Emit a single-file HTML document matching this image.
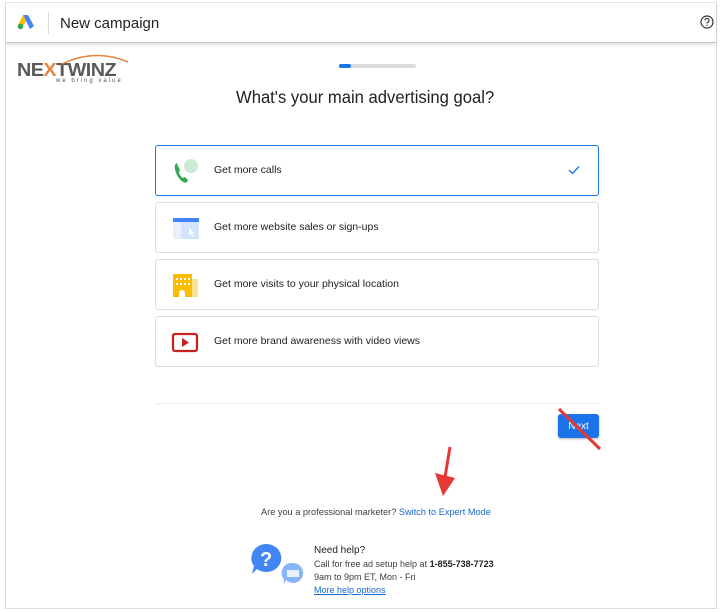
<!DOCTYPE html>
<html><head><style>
*{box-sizing:border-box;margin:0;padding:0}
body{width:720px;height:612px;background:#fff;font-family:"Liberation Sans",Arial,sans-serif;position:relative;overflow:hidden;color:#202124}
.frame{position:absolute;left:5px;top:2px;width:712px;height:607px;border:1px solid #dadce0;border-top:1px solid #e8e8e8}
.hdr{position:absolute;left:6px;top:3px;width:710px;height:40px;background:#fff;border-bottom:1px solid #c8c8c8;box-shadow:0 2px 3px rgba(0,0,0,.12)}
.hdr .t{position:absolute;left:54px;top:12px;font-size:15px;color:#202124}
.hdr .sep{position:absolute;left:42px;top:9px;width:1px;height:22px;background:#dadce0}
.card{position:absolute;left:155px;width:444px;height:51px;border:1px solid #dadce0;border-radius:3px;background:#fff}
.card.sel{border:1px solid #1a73e8}
.card .lb{position:absolute;left:58px;top:18px;font-size:10.5px;color:#202124}
.card .ic{position:absolute;left:15px;top:13px}
.s{position:absolute;font-size:9.2px}
</style></head><body>
<div class="frame"></div>
<div class="hdr">
 <svg style="position:absolute;left:11px;top:11px" width="18" height="16" viewBox="0 0 18 16"><path d="M6 1 L11 1 L17 12 L13 15 Z" fill="#4285f4"/><path d="M6 1 L9 7 L5 14 L1 11 Z" fill="#fbbc04"/><circle cx="3.5" cy="12.5" r="2.8" fill="#34a853"/></svg>
 <div class="sep"></div>
 <div class="t">New campaign</div>
 <svg style="position:absolute;left:694px;top:12px" width="14" height="14" viewBox="0 0 14 14"><circle cx="7" cy="7" r="6" fill="none" stroke="#333" stroke-width="1.2"/><path d="M5 5.5a2 2 0 1 1 2.6 1.9c-.5.2-.6.6-.6 1.2" fill="none" stroke="#333" stroke-width="1.1"/><circle cx="7" cy="10.3" r=".7" fill="#333"/></svg>
</div>
<div style="position:absolute;left:17px;top:60px;font-size:18px;font-weight:bold;color:#5a5a5a;letter-spacing:-0.5px;transform:scaleX(1.1);transform-origin:left">NE<span style="color:#e8843c">X</span>TWINZ</div>
<svg style="position:absolute;left:60px;top:52px" width="70" height="14"><path d="M2 12 Q35 -4 68 10" fill="none" stroke="#e8843c" stroke-width="1.5"/></svg>
<div style="position:absolute;left:56px;top:78px;font-size:6px;color:#555;letter-spacing:2px">we bring value</div>
<div style="position:absolute;left:339px;top:64px;width:77px;height:4px;border-radius:2px;background:#dadce0"><div style="width:12px;height:4px;border-radius:2px;background:#1a73e8"></div></div>
<div style="position:absolute;left:236px;top:87px;font-size:17.5px;color:#202124;white-space:nowrap;transform:scaleX(0.95);transform-origin:left">What's your main advertising goal?</div>

<div class="card sel" style="top:145px">
 <svg class="ic" width="30" height="26" viewBox="0 0 30 26"><circle cx="20" cy="7" r="7" fill="#ceead6"/><path d="M6 4c-3 1-3 6 0 12s8 9 10 7l1-2-3-3-2 1c-2-1-4-4-4-6l1-2-2-4z" fill="#34a853"/></svg>
 <div class="lb">Get more calls</div>
 <svg style="position:absolute;left:412px;top:19px" width="12" height="10"><path d="M1 5l3.5 3.5L11 1.5" fill="none" stroke="#1a73e8" stroke-width="1.3"/></svg>
</div>
<div class="card" style="top:202px">
 <svg class="ic" width="28" height="24" viewBox="0 0 28 24"><rect x="2" y="2" width="26" height="21" fill="#d2e3fc"/><rect x="2" y="2" width="26" height="4" fill="#4285f4"/><rect x="2" y="6" width="8" height="17" fill="#e8f0fe"/><path d="M18 12l0 8 2-2 2 3 1-.6-2-3 3 0z" fill="#fff"/></svg>
 <div class="lb">Get more website sales or sign-ups</div>
</div>
<div class="card" style="top:259px">
 <svg class="ic" width="28" height="24" viewBox="0 0 28 24"><rect x="18" y="6" width="9" height="18" fill="#fde293"/><rect x="2" y="1" width="19" height="23" fill="#fbbc04"/><g fill="#fff"><rect x="5" y="5" width="2" height="2"/><rect x="9" y="5" width="2" height="2"/><rect x="13" y="5" width="2" height="2"/><rect x="17" y="5" width="2" height="2"/><rect x="5" y="10" width="2" height="2"/><rect x="9" y="10" width="2" height="2"/><rect x="13" y="10" width="2" height="2"/><rect x="17" y="10" width="2" height="2"/><path d="M8 24v-4a3 3 0 0 1 6 0v4z"/></g></svg>
 <div class="lb">Get more visits to your physical location</div>
</div>
<div class="card" style="top:316px">
 <svg class="ic" width="28" height="24" viewBox="0 0 28 24"><rect x="2" y="4" width="24" height="17" rx="2" fill="#fff" stroke="#c5221f" stroke-width="2.2"/><path d="M11 8v9l7-4.5z" fill="#c5221f"/></svg>
 <div class="lb">Get more brand awareness with video views</div>
</div>
<div style="position:absolute;left:155px;top:403px;width:444px;height:1px;background:#eee"></div>
<div style="position:absolute;left:558px;top:414px;width:41px;height:24px;border-radius:3px;background:#1a73e8;box-shadow:0 1px 2px rgba(0,0,0,.3);color:#fff;font-size:10px;text-align:center;line-height:26px">Next</div>
<svg style="position:absolute;left:555px;top:405px" width="50" height="50"><path d="M4 4L45 44" stroke="#e53935" stroke-width="3"/></svg>
<svg style="position:absolute;left:430px;top:445px" width="30" height="52"><path d="M20 2L15 32" stroke="#e53935" stroke-width="3"/><path d="M5 28L25 33L13 51z" fill="#e53935"/></svg>
<div class="s" style="left:261px;top:507px;color:#3c4043">Are you a professional marketer? <span style="color:#1967d2">Switch to Expert Mode</span></div>
<svg style="position:absolute;left:250px;top:543px" width="56" height="45"><path d="M16 1a15 14 0 1 1-9 25l-5 5 2-8A15 14 0 0 1 16 1z" fill="#4285f4"/><text x="10" y="23" font-size="20" font-weight="bold" fill="#fff" font-family="Liberation Sans">?</text><path d="M43 20a10 10 0 1 1-7 17l-2 4-.3-5A10 10 0 0 1 43 20z" fill="#8ab4f8"/><rect x="37" y="27" width="12" height="7" fill="#e8f0fe"/></svg>
<div class="s" style="left:314px;top:545px;font-size:10px;color:#202124">Need help?</div>
<div class="s" style="left:314px;top:559px;color:#3c4043;font-size:9px">Call for free ad setup help at <b style="color:#202124">1-855-738-7723</b></div>
<div class="s" style="left:314px;top:572px;color:#3c4043;font-size:9px">9am to 9pm ET, Mon - Fri</div>
<div class="s" style="left:314px;top:585px;color:#1967d2;text-decoration:underline;font-size:9px">More help options</div>
</body></html>
